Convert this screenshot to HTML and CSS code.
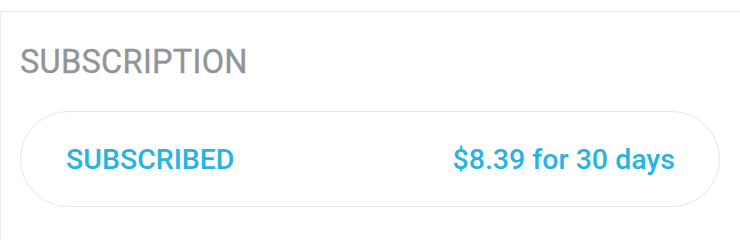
FILE: index.html
```html
<!DOCTYPE html>
<html>
<head>
<meta charset="utf-8">
<link rel="stylesheet" href="styles.css">
</head>
<body>
<div class="top-gap"></div>
<section class="panel">
  <h2 class="section-title">SUBSCRIPTION</h2>
  <div class="pill">
    <span class="status">SUBSCRIBED</span>
    <span class="price">$8.39 for 30 days</span>
  </div>
</section>
</body>
</html>
```
FILE: styles.css
```css
html, body {
  margin: 0;
  padding: 0;
  background: #ffffff;
  font-family: Roboto, "Liberation Sans", sans-serif;
}
.top-gap {
  height: 11px;
}
.panel {
  border-top: 1.5px solid #e4e5e7;
  border-left: 1.5px solid #eceef0;
  padding: 0 0 0 19px;
  height: 230px;
  box-sizing: border-box;
}
.section-title {
  margin: 0;
  padding-top: 32px;
  font-size: 32.5px;
  line-height: 36px;
  font-weight: 400;
  color: #919499;
  letter-spacing: 0.3px;
  -webkit-text-stroke: 0.35px #919499;
}
.pill {
  margin-top: 31px;
  width: 700px;
  height: 96px;
  box-sizing: border-box;
  border: 1.5px solid #e6e7e9;
  border-radius: 48px;
  display: flex;
  justify-content: space-between;
  align-items: center;
  padding: 0 44px 0 45px;
  color: #29b3e2;
  font-weight: 500;
}
.status {
  font-size: 28.5px;
}
.price {
  font-size: 28.5px;
}
```
